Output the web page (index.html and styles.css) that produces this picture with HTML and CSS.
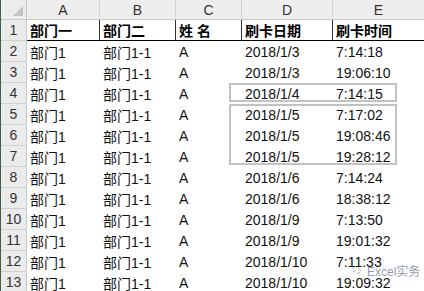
FILE: index.html
```html
<!DOCTYPE html>
<html lang="zh">
<head>
<meta charset="utf-8">
<link rel="stylesheet" href="styles.css">
</head>
<body>
<div class="sheet">
  <div class="grid">
    <div class="corner"><span class="tri"></span></div>
    <div class="colh">A</div><div class="colh">B</div><div class="colh">C</div><div class="colh">D</div><div class="colh last">E</div>

    <div class="rowh">1</div>
    <div class="th">部门一</div><div class="th">部门二</div><div class="th">姓 名</div><div class="th">刷卡日期</div><div class="th last">刷卡时间</div>

    <div class="rowh">2</div>
    <div class="td">部门1</div><div class="td">部门1-1</div><div class="td">A</div><div class="td">2018/1/3</div><div class="td">7:14:18</div>
    <div class="rowh">3</div>
    <div class="td">部门1</div><div class="td">部门1-1</div><div class="td">A</div><div class="td">2018/1/3</div><div class="td">19:06:10</div>
    <div class="rowh">4</div>
    <div class="td">部门1</div><div class="td">部门1-1</div><div class="td">A</div><div class="td">2018/1/4</div><div class="td">7:14:15</div>
    <div class="rowh">5</div>
    <div class="td">部门1</div><div class="td">部门1-1</div><div class="td">A</div><div class="td">2018/1/5</div><div class="td">7:17:02</div>
    <div class="rowh">6</div>
    <div class="td">部门1</div><div class="td">部门1-1</div><div class="td">A</div><div class="td">2018/1/5</div><div class="td">19:08:46</div>
    <div class="rowh">7</div>
    <div class="td">部门1</div><div class="td">部门1-1</div><div class="td">A</div><div class="td">2018/1/5</div><div class="td">19:28:12</div>
    <div class="rowh">8</div>
    <div class="td">部门1</div><div class="td">部门1-1</div><div class="td">A</div><div class="td">2018/1/6</div><div class="td">7:14:24</div>
    <div class="rowh">9</div>
    <div class="td">部门1</div><div class="td">部门1-1</div><div class="td">A</div><div class="td">2018/1/6</div><div class="td">18:38:12</div>
    <div class="rowh">10</div>
    <div class="td">部门1</div><div class="td">部门1-1</div><div class="td">A</div><div class="td">2018/1/9</div><div class="td">7:13:50</div>
    <div class="rowh">11</div>
    <div class="td">部门1</div><div class="td">部门1-1</div><div class="td">A</div><div class="td">2018/1/9</div><div class="td">19:01:32</div>
    <div class="rowh">12</div>
    <div class="td">部门1</div><div class="td">部门1-1</div><div class="td">A</div><div class="td">2018/1/10</div><div class="td">7:11:33</div>
    <div class="rowh">13</div>
    <div class="td">部门1</div><div class="td">部门1-1</div><div class="td">A</div><div class="td">2018/1/10</div><div class="td">19:09:32</div>
  </div>

  <div class="box box1"></div>
  <div class="box box2"></div>

  <div class="watermark">
    <svg class="wm-icon" width="12" height="10" viewBox="0 0 12 10">
      <path d="M1 3 L4 1 M2 6 L5 4 M7 2 L10 5 M6 8 L9 6" stroke="#a9b0bb" stroke-width="1" fill="none"/>
    </svg>
    <span>Excel实务</span>
  </div>
</div>
</body>
</html>
```
FILE: styles.css
```css
html, body {
  margin: 0;
  padding: 0;
  background: #ffffff;
}
body {
  font-family: "Liberation Sans", "Noto Sans CJK SC", sans-serif;
  font-size: 14px;
  color: #111;
}
.sheet {
  position: relative;
  width: 424px;
  height: 291px;
  overflow: hidden;
  border-left: 1px solid #3f5f4a;
  box-sizing: border-box;
}
.grid {
  display: grid;
  grid-template-columns: 26px 73px 76px 66px 91px 91px;
  grid-template-rows: 20px repeat(13, 21px);
}
.corner {
  background: #ececec;
  border-right: 1px solid #c9c9c9;
  border-bottom: 1px solid #c9c9c9;
  position: relative;
}
.tri {
  position: absolute;
  right: 3px;
  bottom: 3px;
  width: 0;
  height: 0;
  border-left: 10px solid transparent;
  border-bottom: 10px solid #c5c5c5;
}
.colh {
  background: #eeeeee;
  border-right: 1px solid #d2d2d2;
  border-bottom: 1px solid #c9c9c9;
  display: flex;
  align-items: center;
  justify-content: center;
  color: #333;
  font-size: 14px;
  padding-top: 1px;
}
.colh.last { border-right: none; }
.rowh {
  background: #ebebeb;
  border-right: 1px solid #c9c9c9;
  border-bottom: 1px solid #d0d0d0;
  display: flex;
  align-items: flex-end;
  justify-content: center;
  color: #333;
  font-size: 14px;
  line-height: 17px;
  padding-bottom: 1px;
}
.th {
  font-weight: bold;
  border-right: 1px solid #333;
  border-bottom: 1px solid #000;
  display: flex;
  align-items: center;
  padding-left: 3px;
  white-space: nowrap;
  color: #000;
}
.th.last { border-right: none; }
.td {
  display: flex;
  align-items: center;
  padding-left: 3px;
  white-space: nowrap;
  color: #111;
}
.box {
  position: absolute;
  left: 228px;
  width: 164px;
  border: 2px solid #c2c2c2;
}
.box1 {
  top: 83px;
  height: 15px;
}
.box2 {
  top: 104px;
  height: 57px;
}
.watermark {
  position: absolute;
  left: 350px;
  top: 262px;
  display: flex;
  align-items: center;
  gap: 4px;
  font-size: 12px;
  color: rgba(110, 120, 140, 0.75);
}
.wm-icon {
  display: block;
}
```
